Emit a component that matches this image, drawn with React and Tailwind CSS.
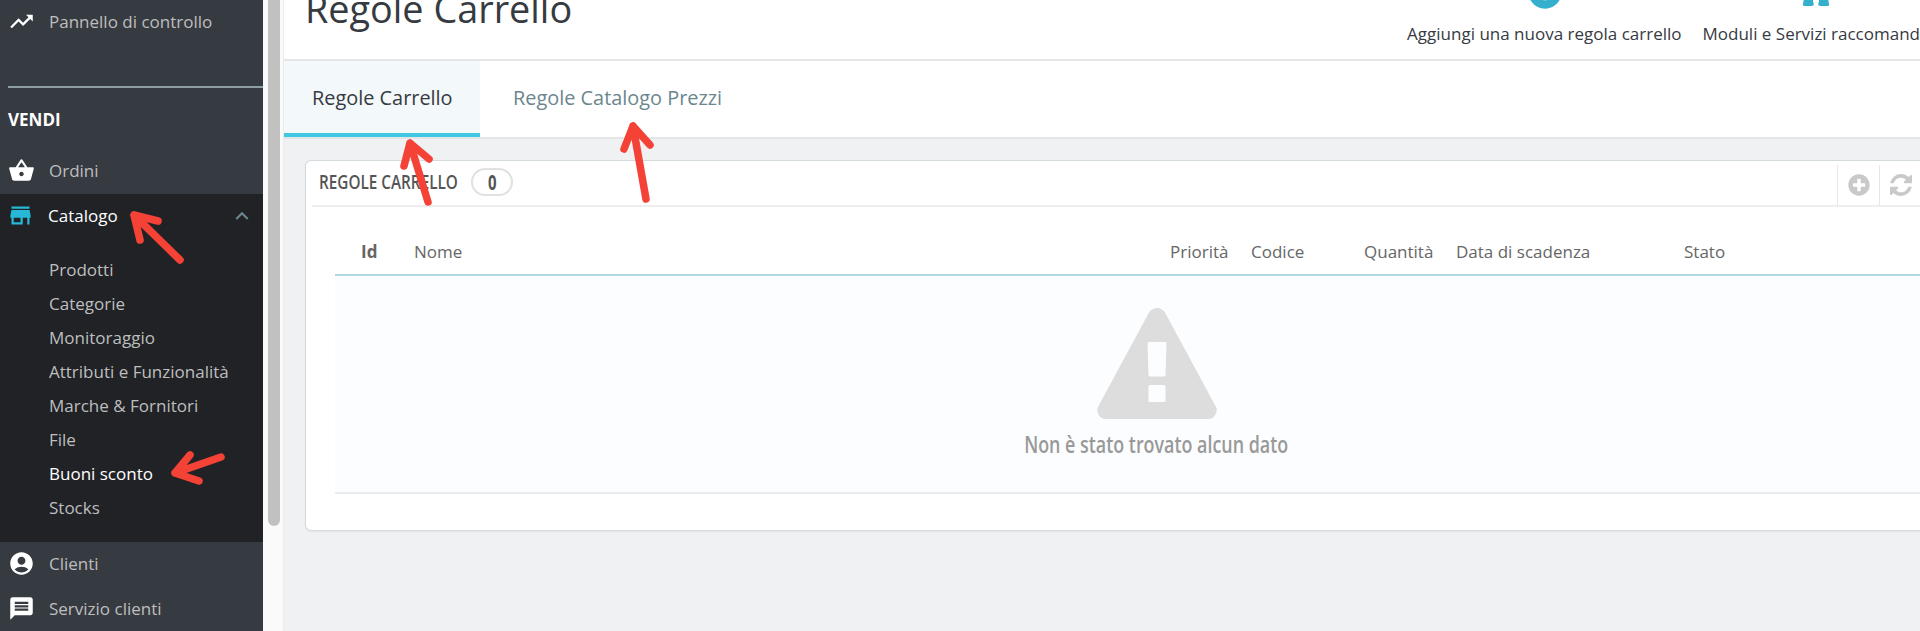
import { MdTrendingUp, MdShoppingBasket, MdStore, MdAccountCircle, MdMessage, MdExpandLess, MdAddCircle } from 'react-icons/md'
import { FaPlusCircle } from 'react-icons/fa'

const catalogLinks = [
  'Prodotti',
  'Categorie',
  'Monitoraggio',
  'Attributi e Funzionalità',
  'Marche & Fornitori',
  'File',
  'Buoni sconto',
  'Stocks',
]

const columns = [
  { label: 'Id', className: 'w-[53px] font-bold' },
  { label: 'Nome', className: 'w-[756px]' },
  { label: 'Priorità', className: 'w-[81px]' },
  { label: 'Codice', className: 'w-[113px]' },
  { label: 'Quantità', className: 'w-[92px]' },
  { label: 'Data di scadenza', className: 'w-[228px]' },
  { label: 'Stato', className: 'w-[120px]' },
]

function SidebarItem({ icon: Icon, label }) {
  return (
    <a className="flex h-[45px] shrink-0 items-center pb-0.5 pl-2 text-[#bebebe]">
      <Icon className="mr-3.5 size-[27px] text-white" />
      <span>{label}</span>
    </a>
  )
}

function Sidebar() {
  return (
    <nav className="flex w-[263px] shrink-0 flex-col bg-[#363a41] text-[17px]">
      <SidebarItem icon={MdTrendingUp} label="Pannello di controllo" />
      <div className="mt-[41px] ml-2 h-0.5 shrink-0 bg-[#8f9ea1]" />
      <div className="flex h-[61px] shrink-0 items-center pt-[3px] pl-2 font-bold text-white">VENDI</div>
      <SidebarItem icon={MdShoppingBasket} label="Ordini" />

      {/* Open section */}
      <div className="h-[348px] shrink-0 bg-[#202226]">
        <a className="flex h-[45px] items-center pr-2 pb-0.5 pl-[7px] text-white">
          <MdStore className="mr-3.5 size-[27px] text-[#25b9d7]" />
          <span className="grow">Catalogo</span>
          <MdExpandLess className="size-[26px] text-[#6c868e]" />
        </a>
        <ul className="pt-3.5 pl-[49px]">
          {catalogLinks.map((link) => (
            <li
              key={link}
              className={`flex h-[34px] items-center ${link === 'Buoni sconto' ? 'text-white' : 'text-[#bebebe]'}`}
            >
              {link}
            </li>
          ))}
        </ul>
      </div>

      <SidebarItem icon={MdAccountCircle} label="Clienti" />
      <SidebarItem icon={MdMessage} label="Servizio clienti" />
    </nav>
  )
}

function PuzzleIcon() {
  return (
    <svg viewBox="0 0 36 36" className="-mt-7 size-9 shrink-0" fill="#35b0cc">
      <path d="M5 10h7q2 0 1-2.500Q12 2 18 2T23 7.500Q22 10 24 10h7v8q0 2-1 3-1 2 0 5l1 6q.5 2-1.500 2h-7q-3 0-2-3 2-7-2.500-7T15.500 31q1 3-2 3h-7Q4.500 34 5 32l1-6q1-3 0-5-1-1-1-3z" />
    </svg>
  )
}

function RefreshIcon() {
  return (
    <svg viewBox="0 0 1536 1536" className="size-[22px]" fill="currentColor">
      <path d="M1511 928q0 5-1 7-64 268-268 434.5t-478 166.5q-146 0-282.5-55t-243.5-157l-129 129q-19 19-45 19t-45-19-19-45v-448q0-26 19-45t45-19h448q26 0 45 19t19 45-19 45l-137 137q71 66 161 102t187 36q134 0 250-65t186-179q11-17 53-117 8-23 30-23h192q13 0 22.5 9.5t9.5 22.5zm25-800v448q0 26-19 45t-45 19h-448q-26 0-45-19t-19-45 19-45l138-138q-148-137-349-137-134 0-250 65t-186 179q-11 17-53 117-8 23-30 23h-199q-13 0-22.5-9.5t-9.5-22.5v-7q65-268 270-434.5t480-166.5q146 0 284 55.5t245 156.5l130-129q19-19 45-19t45 19 19 45z" />
    </svg>
  )
}

function WarningIcon() {
  return (
    <svg viewBox="0 0 120 111" className="h-[111px] w-[120px]">
      <path
        d="M52 4.500Q55 0 60 0T68 4.500L118.500 98Q121 102 118.500 106.500T111 111H9Q4 111 1.500 106.500T1.500 98Z"
        fill="#dddddd"
      />
      <path d="M52 34h16q1.500 0 1.500 1.500l-1 31.500q0 1.500-1.500 1.500h-14q-1.500 0-1.500-1.500l-1-31.500q0-1.500 1.500-1.500z" fill="#fcfdfe" />
      <rect x="51.500" y="77" width="17" height="17" rx="1.500" fill="#fcfdfe" />
    </svg>
  )
}

/* Red hand-drawn arrows over the page */
function Arrows() {
  return (
    <svg
      viewBox="0 0 1920 631"
      className="pointer-events-none absolute inset-0 h-[631px] w-[1920px]"
      fill="none"
      stroke="#f44336"
      strokeWidth="7.5"
      strokeLinecap="round"
      strokeLinejoin="round"
    >
      <path d="M180 260L134 215M158 221L134 215L140 240" />
      <path d="M221 457L175 473M190 455L175 473L199 481" />
      <path d="M428 202L410 143M429 159L410 143L404 166" />
      <path d="M646 199L633 126M650 145L633 126L624 149" />
    </svg>
  )
}

export default function App() {
  return (
    <div className="relative flex h-[631px] w-[1920px] overflow-hidden bg-[#eff1f2] font-['Open_Sans',sans-serif]">
      <Sidebar />

      {/* Sidebar scrollbar */}
      <div className="w-[21px] shrink-0 border-r border-[#ececec] bg-[#fafafa] pl-[5px]">
        <div className="h-[526px] w-3 rounded-b-full bg-[#c1c1c1]" />
      </div>

      <main className="flex w-[1636px] shrink-0 flex-col">
        <header className="flex h-[61px] shrink-0 justify-between border-b-2 border-[#e6e6e6] bg-white text-[#363a41]">
          <h1 className="-mt-4 ml-[21px] text-[37.8px] leading-[50px]">Regole Carrello</h1>
          <div className="flex shrink-0 gap-[21px] text-[17px] leading-6 whitespace-nowrap">
            <div className="flex flex-col items-center">
              <MdAddCircle className="-mt-7 ml-0.5 size-10 shrink-0 text-[#35b0cc]" />
              <span className="mt-2.5">Aggiungi una nuova regola carrello</span>
            </div>
            <div className="flex flex-col items-center">
              <div className="ml-2.5">
                <PuzzleIcon />
              </div>
              <span className="mt-3.5">Moduli e Servizi raccomand</span>
            </div>
          </div>
        </header>

        <div className="flex h-[78px] shrink-0 border-b-2 border-[#e3e5e6] bg-white text-[19.9px]">
          <a className="flex w-[196px] items-center border-b-4 border-[#3ec8e4] bg-[#f3f8fb] pt-px pl-7 text-[#363a41]">
            Regole Carrello
          </a>
          <a className="flex items-center pb-[3px] pl-[33px] text-[#6c868e]">Regole Catalogo Prezzi</a>
        </div>

        <section className="mt-[21px] ml-[21px] h-[371px] shrink-0 rounded-l-md border border-r-0 border-[#d3dbdf] bg-white shadow-xs">
          <div className="ml-1.5 flex h-[46px] items-end border-b-2 border-[#eeeeee] text-[#555]">
            <div className="flex h-full grow items-center pb-0.5 pl-[7px]">
              <span className="w-[139px] origin-left scale-x-[0.765] text-[20px] font-semibold whitespace-nowrap">
                REGOLE CARRELLO
              </span>
              <span className="ml-[13px] flex h-7 w-[42px] items-center justify-center rounded-full border-2 border-[#e1e1e1]">
                <span className="scale-x-[0.68] pb-0.5 text-[22px] leading-6 font-bold">0</span>
              </span>
            </div>
            <div className="flex h-10 text-[#c9c9c9]">
              <button className="flex w-[42px] items-center justify-center border-l border-[#e6e6e6]">
                <FaPlusCircle className="size-[22px]" />
              </button>
              <button className="flex w-[41px] items-center justify-center border-l border-[#e6e6e6] pl-0.5">
                <RefreshIcon />
              </button>
            </div>
          </div>

          <div className="ml-[29px]">
            <div className="flex h-[69px] items-center border-b-2 border-[#b3d7e3] pt-[22px] pl-[26px] text-[17px] text-[#666]">
              {columns.map((col) => (
                <div key={col.label} className={`shrink-0 ${col.className}`}>
                  {col.label}
                </div>
              ))}
            </div>
            <div className="flex h-[218px] flex-col items-center border-b-2 border-[#eaedef] bg-[#fcfdfe] pt-8 pl-[58px]">
              <WarningIcon />
              <p className="mt-[9px] scale-x-[0.745] text-2xl font-semibold whitespace-nowrap text-[#999]">
                Non è stato trovato alcun dato
              </p>
            </div>
          </div>
        </section>
      </main>

      <Arrows />
    </div>
  )
}
